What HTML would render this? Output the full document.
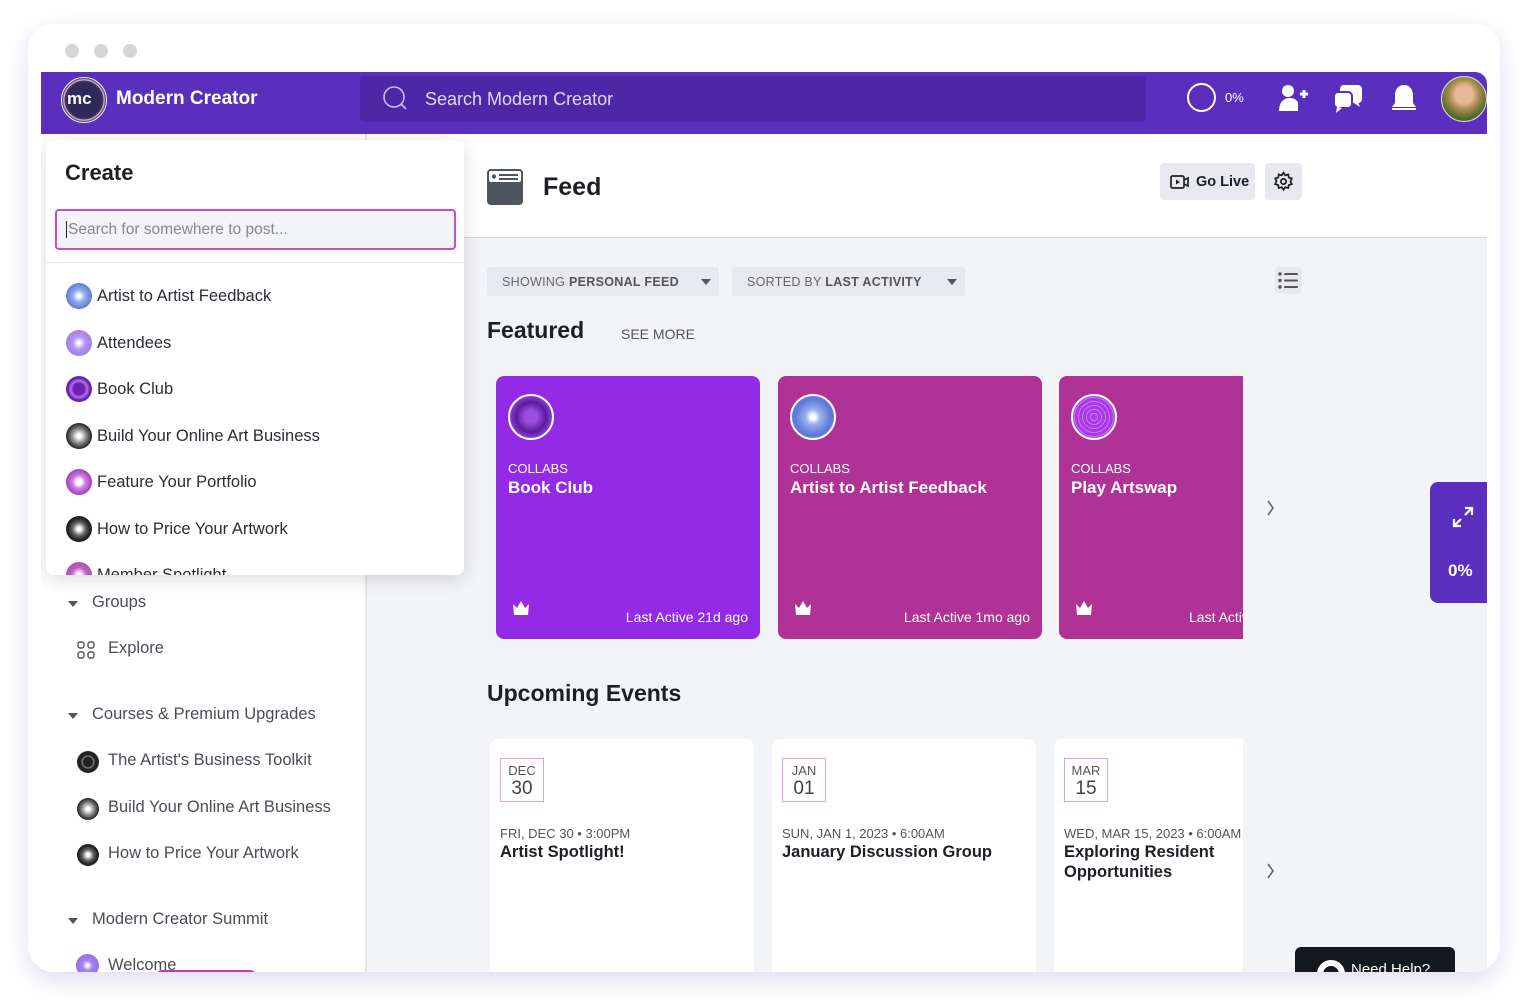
<!DOCTYPE html>
<html><head><meta charset="utf-8"><style>
*{box-sizing:border-box;margin:0;padding:0}
body{width:1528px;height:1005px;background:#fff;font-family:"Liberation Sans",sans-serif;position:relative;overflow:hidden;color:#1d1f25}
.win{position:absolute;left:28px;top:24px;width:1472px;height:948px;background:#fff;border-radius:26px;box-shadow:0 8px 24px rgba(120,90,180,.22);overflow:hidden}
.dot{position:absolute;top:20px;width:14px;height:14px;border-radius:50%;background:#d6d6d8}
.app{position:absolute;left:13px;top:48px;width:1446px;height:900px;background:#f3f4f8;overflow:hidden}
.top{position:absolute;left:0;top:0;width:1446px;height:62px;background:#5a2fbd;border-radius:0 12px 0 0}
.abs{position:absolute}
.ic{position:absolute;border-radius:50%}
.side{position:absolute;left:0;top:62px;width:326px;height:838px;background:#fff;border-right:2px solid #e6e6ec}
.si{position:absolute;font-size:16.5px;color:#4a4d58}
.tri{position:absolute;width:0;height:0;border-left:5px solid transparent;border-right:5px solid transparent;border-top:6px solid #555}
.pop{position:absolute;left:5px;top:68px;width:418px;height:435px;background:#fff;border-radius:8px;box-shadow:0 4px 18px rgba(0,0,0,.15);overflow:hidden}
.pi{position:absolute;left:20px;font-size:16.5px;color:#2b2d35;display:flex;align-items:center;gap:5px}
.pi span.c{width:26px;height:26px;border-radius:50%;display:inline-block}
.card{position:absolute;top:304px;width:264px;height:263px;border-radius:8px;color:#fff}
.card .av{position:absolute;left:12px;top:18px;width:46px;height:46px;border-radius:50%;border:2px solid #fff}
.card .k{position:absolute;left:12px;top:85px;font-size:13px}
.card .t{position:absolute;left:12px;top:102px;font-size:17px;font-weight:bold}
.card .la{position:absolute;right:12px;bottom:14px;font-size:14px}
.card .cr{position:absolute;left:16px;bottom:18px}
.ev{position:absolute;top:667px;width:264px;height:260px;background:#fff;border-radius:8px}
.ev .d{position:absolute;left:10px;top:19px;width:44px;height:44px;border:1.5px solid #e39be6;text-align:center;font-size:13px;color:#555;line-height:15px;padding-top:4px}
.ev .d b{display:block;font-weight:normal;font-size:19px;line-height:22px;color:#444}
.ev .m{position:absolute;left:10px;top:87px;font-size:13px;color:#555;white-space:nowrap}
.ev .n{position:absolute;left:10px;top:103px;font-size:16.5px;font-weight:bold;color:#1d1f25;line-height:20px}
</style></head><body>
<div class="win">
<div class="dot" style="left:37px"></div><div class="dot" style="left:66px"></div><div class="dot" style="left:95px"></div>
<div class="app">
<div class="top">
 <div class="ic" style="left:20px;top:5px;width:46px;height:46px;background:radial-gradient(circle,#2e2a5a 55%,#6a2d60 62%,#ddd 64%,#2e2a5a 70%,#5a2a60);border:1px solid #eee"></div>
 <div class="abs" style="left:26px;top:17px;color:#fff;font-weight:bold;font-size:17px">mc</div>
 <div class="abs" style="left:75px;top:16px;color:#fff;font-weight:bold;font-size:19px">Modern Creator</div>
 <div class="abs" style="left:319px;top:4px;width:786px;height:46px;background:#4c27a6;border-radius:4px"></div>
 <svg class="abs" style="left:341px;top:13px" width="26" height="26" viewBox="0 0 26 26"><circle cx="12" cy="12" r="10" fill="none" stroke="#cbbdf0" stroke-width="1.6"/><path d="M19 19l5 5" stroke="#cbbdf0" stroke-width="1.6"/></svg>
 <div class="abs" style="left:384px;top:17px;color:#e0d8f6;font-size:18px">Search Modern Creator</div>
 <div class="ic" style="left:1146px;top:11px;width:29px;height:29px;border:2px solid #fff"></div>
 <div class="abs" style="left:1184px;top:18px;color:#fff;font-size:13px">0%</div>
 <svg class="abs" style="left:1236px;top:11px" width="32" height="32" viewBox="0 0 32 32" fill="#fff"><circle cx="11" cy="8" r="6"/><path d="M2 28c0-8 4-13 11-13 4 0 7 2 8 5v8z"/><path d="M23 11h8M27 7v8" stroke="#fff" stroke-width="3"/></svg>
 <svg class="abs" style="left:1291px;top:11px" width="32" height="32" viewBox="0 0 32 32" fill="#fff"><rect x="8" y="2" width="22" height="18" rx="4"/><path d="M26 19l2 5-6-4z"/><rect x="2" y="9" width="18" height="16" rx="4" stroke="#5a2fbd" stroke-width="2"/><path d="M5 24l-1 6 6-5z"/></svg>
 <svg class="abs" style="left:1348px;top:11px" width="30" height="32" viewBox="0 0 30 32" fill="#fff"><path d="M15 2c-6 0-9 5-9 10v8l-3 4h24l-3-4v-8c0-5-3-10-9-10z"/><path d="M3 26h24" stroke="#fff" stroke-width="2"/></svg>
 <div class="ic" style="left:1400px;top:4px;width:46px;height:46px;background:radial-gradient(circle at 50% 40%,#e9b79a 25%,#a28a4a 45%,#4e6a2e 70%);border:1px solid #ddd"></div>
</div>
<div class="abs" style="left:326px;top:62px;width:1120px;height:104px;background:#fff;border-bottom:1.5px solid #d8d8e2"></div>
<svg class="abs" style="left:445px;top:96px" width="38" height="38" viewBox="0 0 38 38"><rect x="1" y="1" width="36" height="36" rx="4" fill="#4f5461"/><rect x="3" y="3" width="32" height="11" rx="2" fill="#fff"/><circle cx="8" cy="8.5" r="2.2" fill="#4f5461"/><rect x="13" y="6" width="19" height="2" fill="#4f5461"/><rect x="13" y="10" width="19" height="2" fill="#4f5461"/></svg>
<div class="abs" style="left:502px;top:101px;font-size:25px;font-weight:bold">Feed</div>
<div class="abs" style="left:1119px;top:91px;width:95px;height:37px;background:#e8e9ee;border-radius:4px"></div>
<svg class="abs" style="left:1129px;top:102px" width="20" height="16" viewBox="0 0 20 16"><rect x="1" y="2" width="13" height="12" rx="1.5" fill="none" stroke="#222" stroke-width="1.7"/><path d="M6 5.5v5l4-2.5z" fill="#222"/><path d="M14 6l4-2v8l-4-2" fill="none" stroke="#222" stroke-width="1.7"/></svg>
<div class="abs" style="left:1155px;top:102px;font-size:14.5px;font-weight:bold">Go Live</div>
<div class="abs" style="left:1224px;top:91px;width:37px;height:37px;background:#e8e9ee;border-radius:4px"></div>
<svg class="abs" style="left:1232px;top:99px" width="21" height="21" viewBox="0 0 24 24" fill="none" stroke="#222" stroke-width="2"><circle cx="12" cy="12" r="3"/><path d="M12 2l2 3 3.5-1 .5 3.5 3.5 1-1.5 3.5 1.5 3-3.5 1-.5 3.5-3.5-1-2 3-2-3-3.5 1-.5-3.5-3.5-1 1.5-3.5-1.5-3 3.5-1 .5-3.5 3.5 1z"/></svg>
<div class="abs" style="left:446px;top:195px;width:232px;height:29px;background:#e8e9ee;border-radius:3px;font-size:12.5px;color:#666;padding:8px 15px;letter-spacing:.3px">SHOWING <b style="color:#555">PERSONAL FEED</b><span class="tri" style="right:8px;top:12px"></span></div>
<div class="abs" style="left:691px;top:195px;width:233px;height:29px;background:#e8e9ee;border-radius:3px;font-size:12.5px;color:#666;padding:8px 15px;letter-spacing:.3px">SORTED BY <b style="color:#555">LAST ACTIVITY</b><span class="tri" style="right:8px;top:12px"></span></div>
<div class="abs" style="left:1234px;top:195px;width:27px;height:27px;background:#e8e9ee;border-radius:4px"></div>
<svg class="abs" style="left:1237px;top:200px" width="21" height="17" viewBox="0 0 21 17" fill="#555"><circle cx="2" cy="2" r="1.7"/><circle cx="2" cy="8.5" r="1.7"/><circle cx="2" cy="15" r="1.7"/><rect x="6" y="1" width="14" height="2" rx="1"/><rect x="6" y="7.5" width="14" height="2" rx="1"/><rect x="6" y="14" width="14" height="2" rx="1"/></svg>
<div class="abs" style="left:446px;top:245px;font-size:23px;font-weight:bold">Featured</div>
<div class="abs" style="left:580px;top:254px;font-size:14px;color:#555">SEE MORE</div>
<div class="card" style="left:455px;background:#922ae6"><div class="av" style="background:radial-gradient(circle,#9a4fe0 20%,#5c1d9e 50%,#8a3bd0 70%,#5c1d9e)"></div><div class="k">COLLABS</div><div class="t">Book Club</div><div class="cr"><svg width="18" height="16" viewBox="0 0 18 16" fill="#fff"><path d="M1 4l4 4 4-7 4 7 4-4-1 11H2z"/></svg></div><div class="la">Last Active 21d ago</div></div>
<div class="card" style="left:737px;background:#b03297"><div class="av" style="background:radial-gradient(circle,#fff 8%,#9ab0f0 25%,#5f7ad8 60%)"></div><div class="k">COLLABS</div><div class="t">Artist to Artist Feedback</div><div class="cr"><svg width="18" height="16" viewBox="0 0 18 16" fill="#fff"><path d="M1 4l4 4 4-7 4 7 4-4-1 11H2z"/></svg></div><div class="la">Last Active 1mo ago</div></div>
<div class="abs" style="left:1018px;top:304px;width:184px;height:263px;overflow:hidden"><div class="card" style="left:0;top:0;background:#b03297"><div class="av" style="background:repeating-radial-gradient(circle,#a838e8 0 3px,#c77af0 3px 4px);"></div><div class="k">COLLABS</div><div class="t">Play Artswap</div><div class="cr"><svg width="18" height="16" viewBox="0 0 18 16" fill="#fff"><path d="M1 4l4 4 4-7 4 7 4-4-1 11H2z"/></svg></div><div class="la" style="right:auto;left:130px">Last Active</div></div></div>
<svg class="abs" style="left:1226px;top:428px" width="8" height="16" viewBox="0 0 8 16"><path d="M1 1l5 7-5 7" fill="none" stroke="#666" stroke-width="1.6"/></svg>
<div class="abs" style="left:1389px;top:410px;width:60px;height:121px;background:#5a2fbd;border-radius:8px 0 0 8px;color:#fff"><svg style="position:absolute;left:22px;top:24px" width="22" height="22" viewBox="0 0 22 22" fill="none" stroke="#fff" stroke-width="2.2"><path d="M13 2h7v7M20 2l-7 7M9 20H2v-7M2 20l7-7"/></svg><div style="position:absolute;left:18px;top:79px;font-weight:bold;font-size:17px">0%</div></div>
<div class="abs" style="left:446px;top:608px;font-size:23px;font-weight:bold">Upcoming Events</div>
<div class="ev" style="left:449px"><div class="d">DEC<b>30</b></div><div class="m">FRI, DEC 30 • 3:00PM</div><div class="n">Artist Spotlight!</div></div>
<div class="ev" style="left:731px"><div class="d">JAN<b>01</b></div><div class="m">SUN, JAN 1, 2023 • 6:00AM</div><div class="n">January Discussion Group</div></div>
<div class="abs" style="left:1013px;top:667px;width:189px;height:260px;overflow:hidden"><div class="ev" style="left:0;top:0"><div class="d">MAR<b>15</b></div><div class="m">WED, MAR 15, 2023 • 6:00AM</div><div class="n">Exploring Resident<br>Opportunities</div></div></div>
<svg class="abs" style="left:1226px;top:791px" width="8" height="16" viewBox="0 0 8 16"><path d="M1 1l5 7-5 7" fill="none" stroke="#666" stroke-width="1.6"/></svg>
<div class="abs" style="left:1254px;top:875px;width:160px;height:40px;background:#15181e;border-radius:6px;color:#fff;font-size:15px;padding:14px 0 0 56px">Need Help?</div>
<div class="ic" style="left:1276px;top:888px;width:28px;height:28px;border:6px solid #fff"></div>
<div class="side">
 <div class="tri" style="left:27px;top:467px"></div><div class="si" style="left:51px;top:459px">Groups</div>
 <svg class="abs" style="left:36px;top:507px" width="18" height="18" viewBox="0 0 18 18" fill="none" stroke="#555" stroke-width="1.4"><rect x="1" y="1" width="6" height="6" rx="2"/><rect x="11" y="1" width="6" height="6" rx="2"/><rect x="1" y="11" width="6" height="6" rx="2"/><rect x="11" y="11" width="6" height="6" rx="2"/></svg>
 <div class="si" style="left:67px;top:505px">Explore</div>
 <div class="tri" style="left:27px;top:579px"></div><div class="si" style="left:51px;top:571px">Courses &amp; Premium Upgrades</div>
 <div class="ic" style="left:36px;top:617px;width:22px;height:22px;background:radial-gradient(circle,#222 30%,#888 38%,#222 46%)"></div><div class="si" style="left:67px;top:617px">The Artist's Business Toolkit</div>
 <div class="ic" style="left:36px;top:664px;width:22px;height:22px;background:radial-gradient(circle,#fff 10%,#888 40%,#222 70%)"></div><div class="si" style="left:67px;top:664px">Build Your Online Art Business</div>
 <div class="ic" style="left:36px;top:710px;width:22px;height:22px;background:radial-gradient(circle,#fff 10%,#666 35%,#222 60%)"></div><div class="si" style="left:67px;top:710px">How to Price Your Artwork</div>
 <div class="tri" style="left:27px;top:784px"></div><div class="si" style="left:51px;top:776px">Modern Creator Summit</div>
 <div class="ic" style="left:35px;top:820px;width:23px;height:23px;background:radial-gradient(circle,#fff 5%,#a585f0 30%,#8a62e0)"></div><div class="si" style="left:67px;top:822px">Welcome</div>
 <div class="abs" style="left:115px;top:836px;width:100px;height:6px;background:#c33aa8;border-radius:6px 6px 0 0"></div>
</div>
<div class="pop">
 <div class="abs" style="left:19px;top:20px;font-size:22px;font-weight:bold">Create</div>
 <div class="abs" style="left:9px;top:69px;width:401px;height:41px;border:2px solid #d04bc0;border-radius:4px;background:#f3f4f8;font-size:15.5px;color:#888;padding:10px 9px"><span style="border-left:1.5px solid #222;padding-left:1px">Search for somewhere to post...</span></div>
 <div class="abs" style="left:0;top:122px;width:418px;height:1px;background:#e2e2e8"></div>
 <div class="pi" style="top:143px"><span class="c" style="background:radial-gradient(circle,#fff 8%,#9ab0f0 30%,#5f7ad8 70%)"></span>Artist to Artist Feedback</div>
 <div class="pi" style="top:190px"><span class="c" style="background:radial-gradient(circle,#fff 5%,#b295f0 35%,#9270e0)"></span>Attendees</div>
 <div class="pi" style="top:236px"><span class="c" style="background:radial-gradient(circle,#6a22b0 30%,#b070e8 45%,#6a22b0 60%)"></span>Book Club</div>
 <div class="pi" style="top:283px"><span class="c" style="background:radial-gradient(circle,#fff 10%,#888 40%,#222 70%)"></span>Build Your Online Art Business</div>
 <div class="pi" style="top:329px"><span class="c" style="background:radial-gradient(circle,#fff 15%,#d080e0 35%,#a040c0 70%)"></span>Feature Your Portfolio</div>
 <div class="pi" style="top:376px"><span class="c" style="background:radial-gradient(circle,#fff 10%,#666 35%,#222 60%)"></span>How to Price Your Artwork</div>
 <div class="pi" style="top:422px"><span class="c" style="background:radial-gradient(circle,#fff 10%,#c060c0 40%,#a040b0)"></span>Member Spotlight</div>
</div>
</div>
</div>
</body></html>
